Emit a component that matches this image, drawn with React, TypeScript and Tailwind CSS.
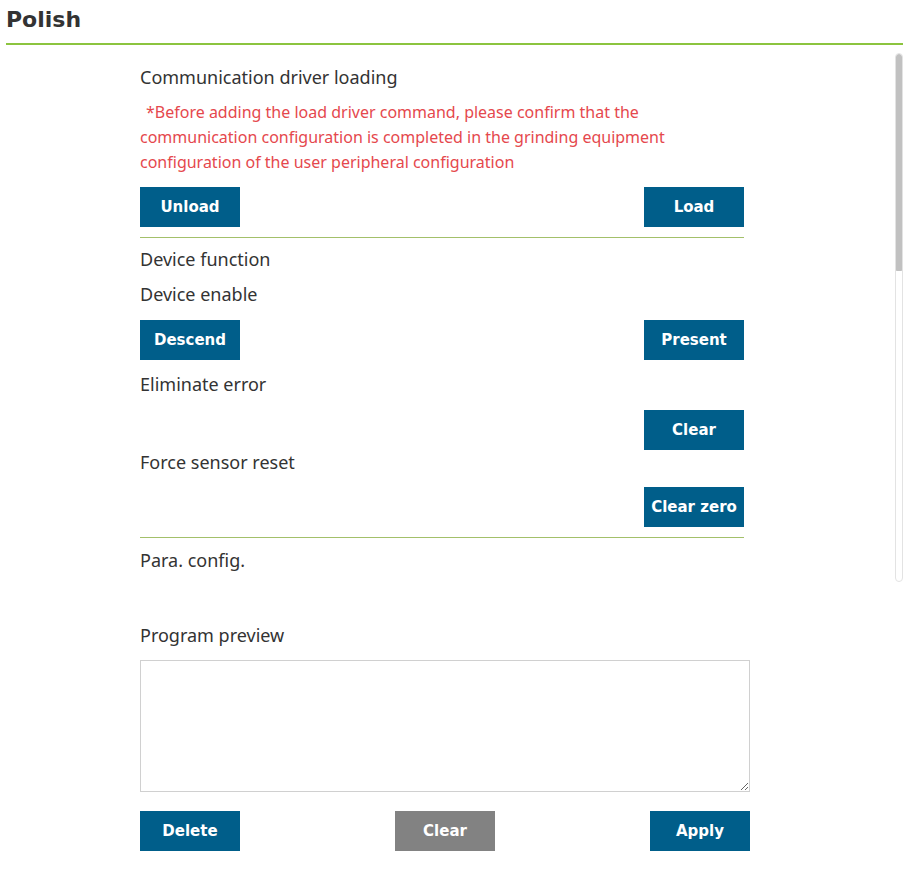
import React from "react";

const btn =
  "w-[100px] h-[40px] flex items-center justify-center bg-[#005e8a] text-white text-[15px] font-bold font-['DejaVu_Sans',Verdana,sans-serif]";

function Btn({ children, gray }: { children: React.ReactNode; gray?: boolean }) {
  return (
    <button
      className={
        gray
          ? "w-[100px] h-[40px] flex items-center justify-center bg-[#828282] text-white text-[15px] font-bold font-['DejaVu_Sans',Verdana,sans-serif]"
          : btn
      }
    >
      {children}
    </button>
  );
}

function Label({ children, className = "" }: { children: React.ReactNode; className?: string }) {
  return (
    <div className={"h-[24px] leading-[24px] text-[18px] text-[#333333] " + className}>{children}</div>
  );
}

export default function App() {
  return (
    <div className="w-[916px] h-[891px] bg-white font-['Noto_Sans','Open_Sans',sans-serif] overflow-hidden">
      <div className="ml-[6px] w-[897px]">
        {/* Header */}
        <div className="pt-[7px] pb-[10px] border-b-2 border-[#8cc43f]">
          <h1 className="text-[22px] leading-[26px] font-bold text-[#333333] font-['DejaVu_Sans',Verdana,sans-serif]">
            Polish
          </h1>
        </div>

        {/* Scroll area */}
        <div className="flex h-[543px]">
          <div className="flex-1 overflow-hidden pl-[134px]">
            <div className="w-[604px] flex flex-col">
              <Label className="mt-[20px]">Communication driver loading</Label>
              <p className="mt-[11px] text-[16px] leading-[25px] text-[#e5484d] indent-[6px]">
                *Before adding the load driver command, please confirm that the communication configuration is
                completed in the grinding equipment configuration of the user peripheral configuration
              </p>
              <div className="mt-[12px] flex justify-between">
                <Btn>Unload</Btn>
                <Btn>Load</Btn>
              </div>
              <div className="mt-[10px] h-[1px] bg-[#a3c06a]" />
              <Label className="mt-[9px]">Device function</Label>
              <Label className="mt-[11px]">Device enable</Label>
              <div className="mt-[14px] flex justify-between">
                <Btn>Descend</Btn>
                <Btn>Present</Btn>
              </div>
              <Label className="mt-[12px]">Eliminate error</Label>
              <div className="mt-[14px] flex justify-end">
                <Btn>Clear</Btn>
              </div>
              <Label className="mt-[0px]">Force sensor reset</Label>
              <div className="mt-[13px] flex justify-end">
                <Btn>Clear zero</Btn>
              </div>
              <div className="mt-[10px] h-[1px] bg-[#a3c06a]" />
              <Label className="mt-[10px]">Para. config.</Label>
            </div>
          </div>
          {/* Scrollbar */}
          <div className="w-[8px] mt-[8px] h-[529px] rounded-[4px] border border-[#e3e3e3] bg-white flex flex-col overflow-hidden">
            <div className="h-[217px] bg-[#c1c1c1] rounded-t-[4px] rounded-b-[1px]" />
          </div>
        </div>

        {/* Program preview */}
        <div className="pl-[134px]">
          <div className="w-[610px] flex flex-col">
            <Label className="mt-[35px]">Program preview</Label>
            <textarea className="mt-[13px] h-[132px] w-[610px] border border-[#d0d0d0] bg-white outline-none" />
            <div className="mt-[19px] flex justify-between">
              <Btn>Delete</Btn>
              <Btn gray>Clear</Btn>
              <Btn>Apply</Btn>
            </div>
          </div>
        </div>
      </div>
    </div>
  );
}
